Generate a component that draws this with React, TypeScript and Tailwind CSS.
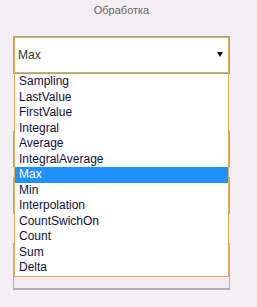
const options = [
  'Sampling',
  'LastValue',
  'FirstValue',
  'Integral',
  'Average',
  'IntegralAverage',
  'Max',
  'Min',
  'Interpolation',
  'CountSwichOn',
  'Count',
  'Sum',
  'Delta',
]

export default function App() {
  const selected = 'Max'

  return (
    <div className="min-h-[307px] w-[257px] bg-[#f3eff4] px-[13px] pt-[3px] font-['Liberation_Sans',sans-serif]">
      <div className="w-[217px]">
        <div className="h-[14px] text-center text-[11px] leading-[14px] text-[#666]">Обработка</div>

        <div className="relative mt-[19px]">
          {/* select */}
          <div className="h-[38px] border border-[#a0a0a0]">
            <div className="flex h-full items-center justify-between border border-[#e0ad55] bg-white pl-[3px] pr-[5px]">
              <span className="text-[12px] text-[#333]">{selected}</span>
              <svg width="6" height="5" viewBox="0 0 6 5" className="mt-[-1px]">
                <path d="M0 0H6L3 5Z" fill="#111" />
              </svg>
            </div>
          </div>

          {/* open list */}
          <ul className="absolute left-px right-px top-[38px] z-10 border-x border-b border-[#e0ad55] bg-white">
            {options.map((o) => (
              <li
                key={o}
                className={
                  o === selected
                    ? 'h-[15.5px] bg-[#1e90ff] pl-[4px] text-[12px] leading-[15.5px] text-white'
                    : 'h-[15.5px] pl-[4px] text-[12px] leading-[15.5px] text-[#10103a]'
                }
              >
                {o}
              </li>
            ))}
          </ul>

          {/* fields hidden behind the list */}
          <div className="mt-[57px] h-[36px] border-x border-[#a8a8a8] bg-white" />
          <div className="mt-[10px] h-[37px] border-x border-[#a8a8a8] bg-white" />
          <div className="mt-[29px] h-[47px] border-x border-b-2 border-[#b0b0b0] bg-[#f0ecf0]" />
        </div>
      </div>
    </div>
  )
}
